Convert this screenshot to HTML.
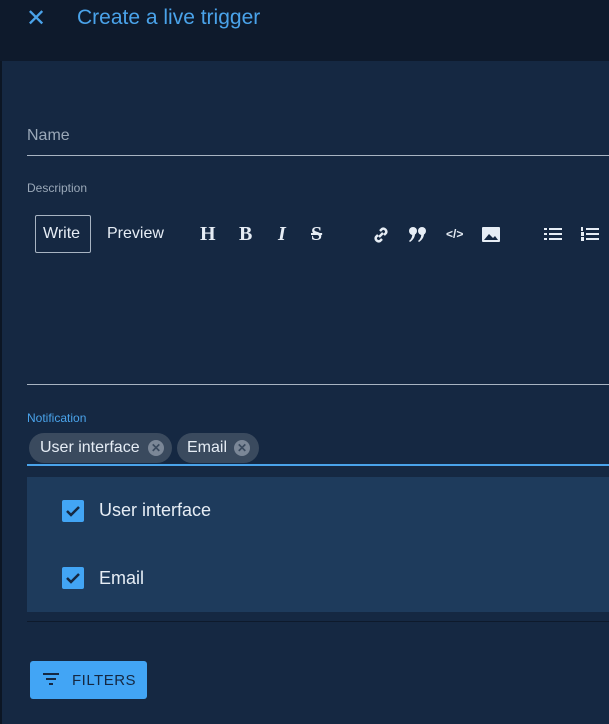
<!DOCTYPE html>
<html><head><style>
*{margin:0;padding:0;box-sizing:border-box}
body{width:609px;height:724px;background:#152842;font-family:"Liberation Sans",sans-serif;position:relative;overflow:hidden;color:#e6edf5}
.a{position:absolute}
.hdr{left:0;top:0;width:609px;height:61px;background:#0e1a2c}
.ic{color:#e6edf5;font-weight:bold;font-size:17px}
</style></head><body>
<div class="a" style="left:0;top:0;width:2px;height:724px;background:#0c1624"></div>
<div class="a hdr"></div>
<div class="a" style="left:26px;top:4px;color:#4aa3ea;font-size:24px">✕</div>
<div class="a" style="left:77px;top:6px;color:#4aa3ea;font-size:21px">Create a live trigger</div>
<div class="a" style="left:27px;top:127px;color:#9aa8b8;font-size:16px">Name</div>
<div class="a" style="left:27px;top:155px;width:582px;height:1px;background:#a8b4c2"></div>
<div class="a" style="left:27px;top:181px;color:#9aa8b8;font-size:12px">Description</div>
<div class="a" style="left:35px;top:215px;width:56px;height:38px;border:1px solid #a8b4c2;border-radius:2px"></div>
<div class="a" style="left:43px;top:225px;font-size:16px">Write</div>
<div class="a" style="left:107px;top:225px;font-size:16px">Preview</div>
<div class="a ic" style="left:200px;top:223px;font-family:'Liberation Serif',serif;font-size:20px">H</div>
<div class="a ic" style="left:239px;top:223px;font-family:'Liberation Serif',serif;font-size:20px">B</div>
<div class="a ic" style="left:278px;top:223px;font-family:'Liberation Serif',serif;font-style:italic;font-size:20px">I</div>
<div class="a ic" style="left:311px;top:223px;font-family:'Liberation Serif',serif;font-size:20px;text-decoration:line-through">S</div>
<svg class="a" style="left:372px;top:226px" width="18" height="18" viewBox="0 0 18 18" fill="none" stroke="#e6edf5" stroke-width="2.5"><path d="M8 5l2-2a3 3 0 014 4l-2 2M10 13l-2 2a3 3 0 01-4-4l2-2M7 11l4-4"/></svg>
<svg class="a" style="left:409px;top:227px" width="18" height="15" fill="#e6edf5"><circle cx="4" cy="4" r="4"/><path d="M6 4q1 7-5 11l-1-1q4-3 3-8z"/><circle cx="13" cy="4" r="4"/><path d="M15 4q1 7-5 11l-1-1q4-3 3-8z"/></svg>
<div class="a ic" style="left:446px;top:227px;font-size:12px">&lt;/&gt;</div>
<svg class="a" style="left:482px;top:227px" width="18" height="15"><rect x="0" y="0" width="18" height="15" rx="1" fill="#e6edf5"/><path d="M2 13l5-6 4 4 2-2 3 4z" fill="#152842"/></svg>
<svg class="a" style="left:544px;top:227px" width="18" height="15" fill="#e6edf5"><rect x="0" y="1" width="3" height="2"/><rect x="5" y="1" width="13" height="2"/><rect x="0" y="6" width="3" height="2"/><rect x="5" y="6" width="13" height="2"/><rect x="0" y="11" width="3" height="2"/><rect x="5" y="11" width="13" height="2"/></svg>
<svg class="a" style="left:581px;top:227px" width="18" height="15" fill="#e6edf5"><rect x="0" y="0" width="2" height="4"/><rect x="5" y="1" width="13" height="2"/><rect x="0" y="5" width="3" height="4"/><rect x="5" y="6" width="13" height="2"/><rect x="0" y="10" width="3" height="4"/><rect x="5" y="11" width="13" height="2"/></svg>
<div class="a" style="left:27px;top:384px;width:582px;height:1px;background:#a8b4c2"></div>
<div class="a" style="left:27px;top:411px;color:#4aa3ea;font-size:12px">Notification</div>
<div class="a" style="left:29px;top:433px;width:143px;height:30px;border-radius:15px;background:#3a4a5e"></div>
<div class="a" style="left:40px;top:439px;font-size:16px">User interface</div>
<div class="a" style="left:148px;top:440px;width:16px;height:16px;border-radius:8px;background:#7b8797;color:#3a4a5e;font-size:12px;text-align:center;line-height:16px;font-weight:bold">✕</div>
<div class="a" style="left:177px;top:433px;width:82px;height:30px;border-radius:15px;background:#3a4a5e"></div>
<div class="a" style="left:187px;top:439px;font-size:16px">Email</div>
<div class="a" style="left:234px;top:440px;width:16px;height:16px;border-radius:8px;background:#7b8797;color:#3a4a5e;font-size:12px;text-align:center;line-height:16px;font-weight:bold">✕</div>
<div class="a" style="left:27px;top:464px;width:582px;height:2px;background:#4aa3ea"></div>
<div class="a" style="left:27px;top:477px;width:582px;height:135px;background:#1e3b5c"></div>
<svg class="a" style="left:62px;top:500px" width="22" height="22"><rect width="22" height="22" rx="2" fill="#42a5f5"/><path d="M5 11l4 4 8-8" stroke="#152842" stroke-width="2.5" fill="none"/></svg>
<div class="a" style="left:99px;top:500px;font-size:18px">User interface</div>
<svg class="a" style="left:62px;top:567px" width="22" height="22"><rect width="22" height="22" rx="2" fill="#42a5f5"/><path d="M5 11l4 4 8-8" stroke="#152842" stroke-width="2.5" fill="none"/></svg>
<div class="a" style="left:99px;top:568px;font-size:18px">Email</div>
<div class="a" style="left:27px;top:621px;width:582px;height:1px;background:#0e1a2c"></div>
<div class="a" style="left:30px;top:661px;width:117px;height:38px;border-radius:3px;background:#42a5f5"></div>
<svg class="a" style="left:43px;top:673px" width="16" height="13" fill="#152842"><rect x="0" y="0" width="16" height="2"/><rect x="3" y="5" width="10" height="2"/><rect x="6" y="10" width="4" height="2"/></svg>
<div class="a" style="left:72px;top:672px;font-size:15px;color:#152842;letter-spacing:.5px">FILTERS</div>
</body></html>
